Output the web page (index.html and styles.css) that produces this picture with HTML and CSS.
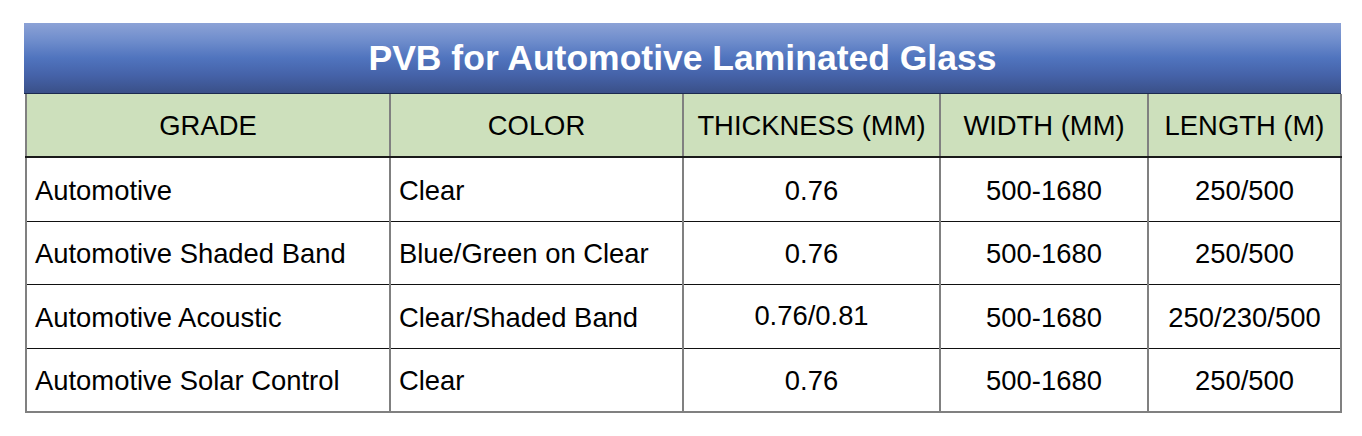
FILE: index.html
```html
<!DOCTYPE html>
<html>
<head>
<meta charset="utf-8">
<link rel="stylesheet" href="styles.css">
</head>
<body>
<div class="wrap">
  <div class="title">PVB for Automotive Laminated Glass</div>
  <table class="spec">
    <colgroup>
      <col class="c1"><col class="c2"><col class="c3"><col class="c4"><col class="c5">
    </colgroup>
    <thead>
      <tr>
        <th>GRADE</th><th>COLOR</th><th>THICKNESS (MM)</th><th>WIDTH (MM)</th><th>LENGTH (M)</th>
      </tr>
    </thead>
    <tbody>
      <tr><td class="l">Automotive</td><td class="l">Clear</td><td>0.76</td><td>500-1680</td><td>250/500</td></tr>
      <tr><td class="l">Automotive Shaded Band</td><td class="l">Blue/Green on Clear</td><td>0.76</td><td>500-1680</td><td>250/500</td></tr>
      <tr><td class="l">Automotive Acoustic</td><td class="l">Clear/Shaded Band</td><td class="up">0.76/0.81</td><td>500-1680</td><td>250/230/500</td></tr>
      <tr><td class="l">Automotive Solar Control</td><td class="l">Clear</td><td>0.76</td><td>500-1680</td><td>250/500</td></tr>
    </tbody>
  </table>
</div>
</body>
</html>
```
FILE: styles.css
```css
html, body {
  margin: 0;
  padding: 0;
  background: #ffffff;
}
.wrap {
  padding: 23px 0 0 24px;
  width: 1317px;
  font-family: "Liberation Sans", Arial, sans-serif;
  color: #000;
}
.title {
  height: 70px;
  border-bottom: 1px solid #1c2a4f;
  background: linear-gradient(to bottom, #8ca2d6 0%, #6f8dcc 25%, #5074be 50%, #4562a8 75%, #3a5088 100%);
  color: #ffffff;
  font-weight: bold;
  font-size: 35.5px;
  line-height: 70px;
  text-align: center;
}
.spec {
  border-collapse: collapse;
  table-layout: fixed;
  width: 1315px;
  margin-left: 1px;
}
.c1 { width: 364px; }
.c2 { width: 293px; }
.c3 { width: 257px; }
.c4 { width: 208px; }
.c5 { width: 193px; }
.spec th, .spec td {
  border-left: 2px solid #808080;
  border-right: 2px solid #808080;
  font-size: 27.4px;
  font-weight: normal;
  text-align: center;
  padding: 0 8px;
  white-space: nowrap;
}
.spec th {
  background: #cde0bc;
  height: 60px;
  border-bottom: 2px solid #1a1a1a;
  padding-top: 2px;
}
.spec td {
  height: 59.5px;
  border-top: 1px solid #111;
  border-bottom: 1px solid #111;
  padding-top: 3px;
  padding-bottom: 0;
}
.spec tbody tr:last-child td {
  border-bottom: 2px solid #808080;
}
.spec td.l {
  text-align: left;
}
.spec td.up {
  padding-top: 0;
}
```
